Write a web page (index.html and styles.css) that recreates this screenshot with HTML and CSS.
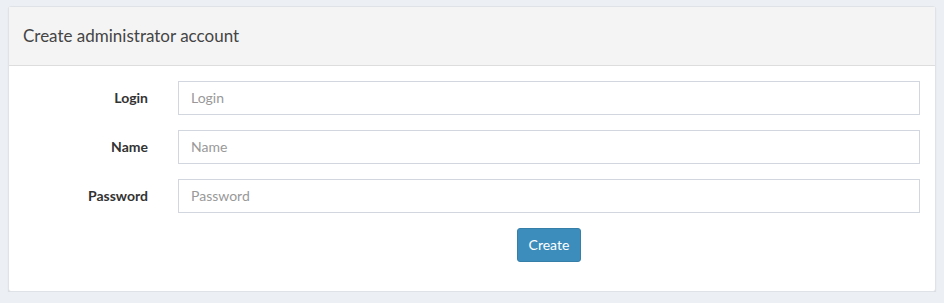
FILE: index.html
```html
<!DOCTYPE html>
<html>
<head>
<meta charset="utf-8">
<link rel="stylesheet" href="styles.css">
</head>
<body>
<div class="card">
  <div class="card-header"><h3 class="card-title">Create administrator account</h3></div>
  <form class="card-body">
    <div class="row">
      <label class="label" for="login">Login</label>
      <input class="input" id="login" type="text" placeholder="Login">
    </div>
    <div class="row">
      <label class="label" for="name">Name</label>
      <input class="input" id="name" type="text" placeholder="Name">
    </div>
    <div class="row">
      <label class="label" for="password">Password</label>
      <input class="input" id="password" type="password" placeholder="Password">
    </div>
    <div class="row actions">
      <span></span>
      <div class="btn-wrap"><button type="button" class="btn">Create</button></div>
    </div>
  </form>
</div>
</body>
</html>
```
FILE: styles.css
```css
html, body {
  margin: 0;
  padding: 0;
  background: #ecf0f5;
}
body {
  padding: 6px 8px 0 8px;
  font-family: "Lato", "Noto Sans", sans-serif;
  color: #333;
}
.card {
  background: #fff;
  border: 1px solid #dfe2e6;
  border-radius: 3px;
  box-shadow: 0 1px 1px rgba(0,0,0,0.12);
  height: 286px;
  box-sizing: border-box;
}
.card-header {
  background: #f4f4f4;
  border-bottom: 1px solid #dddddd;
  height: 59px;
  box-sizing: border-box;
  padding: 0 14px 2px 14px;
  display: flex;
  align-items: center;
}
.card-title {
  margin: 0;
  font-size: 17px;
  font-weight: 400;
  color: #444;
}
.card-body {
  padding: 15px 15px 0 15px;
  display: flex;
  flex-direction: column;
  gap: 15px;
}
.row {
  display: grid;
  grid-template-columns: 124px 1fr;
  column-gap: 30px;
  align-items: center;
}
.label {
  text-align: right;
  font-weight: 700;
  font-size: 14px;
  color: #333;
  padding-bottom: 2px;
}
.input {
  height: 34px;
  box-sizing: border-box;
  border: 1px solid #d2d6de;
  border-radius: 0;
  padding: 6px 12px 8px 12px;
  font-family: inherit;
  font-size: 14px;
  color: #555;
  outline: none;
}
.input::placeholder {
  color: #999;
}
.btn-wrap {
  display: flex;
  justify-content: center;
}
.btn {
  height: 34px;
  width: 64px;
  background: #3c8dbc;
  border: 1px solid #367fa9;
  border-radius: 3px;
  color: #fff;
  font-family: inherit;
  font-size: 14px;
  padding: 0 0 2px 0;
}
```
